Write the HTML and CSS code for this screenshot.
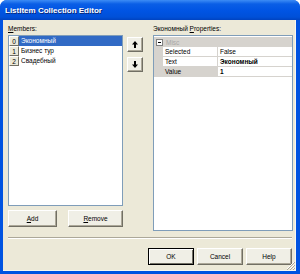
FILE: index.html
```html
<!DOCTYPE html>
<html lang="en">
<head>
  <meta charset="UTF-8" />
  <title>ListItem Collection Editor</title>
  <link rel="stylesheet" href="styles.css">
</head>
<body>
  <div class="window">
    <div class="titlebar">ListItem Collection Editor</div>

    <div class="dialog">
      <div class="main">
        <div class="left-col">
          <div class="label"><u>M</u>embers:</div>
          <div class="list-row">
            <div class="listbox">
              <div class="item selected"><span class="idx">0</span><span class="name">Экономный</span></div>
              <div class="item"><span class="idx">1</span><span class="name">Бизнес тур</span></div>
              <div class="item"><span class="idx">2</span><span class="name">Свадебный</span></div>
            </div>
            <div class="arrows">
              <button class="btn arrow-btn">
                <svg width="6" height="7" viewBox="0 0 6 7"><path d="M3 0 L6 3.5 H4 V7 H2 V3.5 H0 Z" fill="#000"/></svg>
              </button>
              <button class="btn arrow-btn">
                <svg width="6" height="7" viewBox="0 0 6 7"><path d="M3 7 L6 3.5 H4 V0 H2 V3.5 H0 Z" fill="#000"/></svg>
              </button>
            </div>
          </div>
          <div class="list-buttons">
            <button class="btn btn-add"><u>A</u>dd</button>
            <button class="btn btn-remove"><u>R</u>emove</button>
          </div>
        </div>

        <div class="right-col">
          <div class="label">Экономный <u>P</u>roperties:</div>
          <div class="propgrid">
            <div class="category">
              <span class="collapse"></span>
              <span class="cat-name">Misc</span>
            </div>
            <div class="prop">
              <span class="gutter"></span>
              <span class="pname">Selected</span>
              <span class="pvalue">False</span>
            </div>
            <div class="prop">
              <span class="gutter"></span>
              <span class="pname">Text</span>
              <span class="pvalue bold">Экономный</span>
            </div>
            <div class="prop active">
              <span class="gutter"></span>
              <span class="pname">Value</span>
              <span class="pvalue bold">1</span>
            </div>
          </div>
        </div>
      </div>

      <div class="separator"></div>

      <div class="footer">
        <button class="btn btn-default">OK</button>
        <button class="btn">Cancel</button>
        <button class="btn">Help</button>
      </div>

      <svg class="grip" width="9" height="9" viewBox="0 0 9 9">
        <path d="M8 1 L1 8 M8 4 L4 8 M8 7 L7 8" stroke="#fff" stroke-width="1"/>
        <path d="M9 1 L1 9 M9 4 L4 9 M9 7 L7 9" stroke="#aca899" stroke-width="1"/>
      </svg>
    </div>
  </div>
</body>
</html>
```

FILE: styles.css
```css
body {
  margin: 0;
  font-family: 'Liberation Sans', Arial, sans-serif;
  font-size: 6.5px;
  color: #000;
  background: #fff;
}

.window {
  width: 300px;
  height: 274px;
  background: #0053e1;
  border-radius: 7px 7px 0 0;
  display: flex;
  flex-direction: column;
  box-sizing: border-box;
  overflow: hidden;
}

.titlebar {
  height: 20px;
  flex: none;
  padding-left: 5px;
  display: flex;
  align-items: center;
  color: #fff;
  font-weight: bold;
  font-size: 8px;
  background: linear-gradient(to bottom, #3d8cf5 0%, #0a5ee6 20%, #0054e3 55%, #0050d8 85%, #0043c0 100%);
  text-shadow: 1px 1px 0 #0a2a7a;
}

.dialog {
  position: relative;
  flex: 1;
  margin: 0 4px 3px 3px;
  padding: 4px 3px 0 5px;
  background: #ece9d8;
  box-shadow: inset -1px -1px 0 #f7f6f0;
}

.main {
  display: flex;
  gap: 10px;
}

.label {
  height: 11px;
  line-height: 9px;
  color: #000;
}

.left-col {
  width: 135px;
}

.list-row {
  display: flex;
  gap: 4px;
}

.listbox {
  width: 115px;
  height: 171px;
  box-sizing: border-box;
  border: 1px solid #7f9db9;
  background: #fff;
}

.item {
  display: flex;
  height: 10px;
  line-height: 9px;
}

.idx {
  width: 10px;
  box-sizing: border-box;
  text-align: center;
  background: #ece9d8;
  border: 1px solid;
  border-color: #fff #716f64 #716f64 #fff;
}

.name {
  flex: 1;
  padding-left: 2px;
}

.item.selected .name {
  background: #316ac5;
  color: #fff;
}

.arrows {
  display: flex;
  flex-direction: column;
  gap: 5px;
  padding-top: 2px;
}

.btn {
  font-family: inherit;
  font-size: 6.5px;
  height: 17px;
  padding: 0;
  background: #f0efe6;
  border: 1px solid;
  border-color: #fff #716f64 #716f64 #fff;
  box-shadow: inset -1px -1px 0 #aca899;
  color: #000;
}

.arrow-btn {
  width: 16px;
  height: 15px;
  display: flex;
  align-items: center;
  justify-content: center;
}

.list-buttons {
  display: flex;
  gap: 11px;
  margin-top: 4px;
}

.btn-add {
  width: 49px;
}

.btn-remove {
  width: 55px;
}

.right-col {
  width: 140px;
}

.propgrid {
  height: 196px;
  box-sizing: border-box;
  border: 1px solid #7f9db9;
  background: #fff;
  padding-top: 1px;
}

.category {
  height: 10px;
  display: flex;
  align-items: center;
  background: #d6d3ce;
}

.collapse {
  position: relative;
  width: 5px;
  height: 5px;
  margin: 0 3px 0 2px;
  border: 1px solid #808080;
  background: #fff;
}

.collapse::after {
  content: "";
  position: absolute;
  left: 1px;
  top: 2px;
  width: 3px;
  height: 1px;
  background: #000;
}

.cat-name {
  color: #a8a8a8;
}

.prop {
  display: flex;
  height: 10px;
  line-height: 9px;
}

.gutter {
  width: 9px;
  background: #d6d3ce;
}

.pname {
  width: 55px;
  padding-left: 2px;
  box-sizing: border-box;
  border-right: 1px solid #d6d3ce;
  border-bottom: 1px solid #d6d3ce;
}

.pvalue {
  flex: 1;
  padding-left: 2px;
  border-bottom: 1px solid #d6d3ce;
}

.prop.active .pname {
  background: #d6d3ce;
}

.bold {
  font-weight: bold;
}

.separator {
  margin: 6px 1px 0 0;
  border-top: 1px solid #aca899;
  border-bottom: 1px solid #fff;
}

.footer {
  display: flex;
  justify-content: flex-end;
  gap: 3px;
  margin-top: 9px;
  padding-right: 1px;
}

.footer .btn {
  width: 46px;
}

.btn-default {
  border-color: #000;
  box-shadow: inset 1px 1px 0 #fff, inset -1px -1px 0 #716f64;
}

.grip {
  position: absolute;
  right: 1px;
  bottom: 1px;
}
```
